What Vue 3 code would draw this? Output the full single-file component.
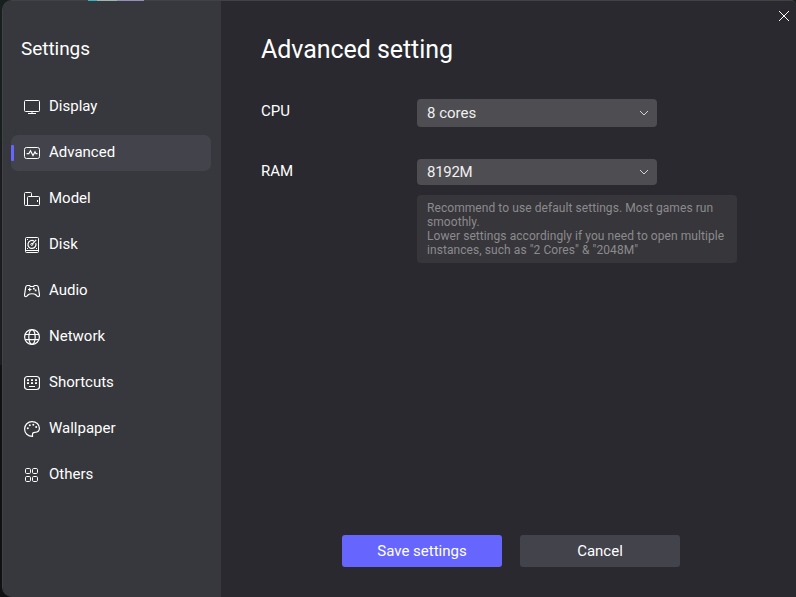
<script setup>
import { ref } from 'vue'

const items = ['Display', 'Advanced', 'Model', 'Disk', 'Audio', 'Network', 'Shortcuts', 'Wallpaper', 'Others']
const active = ref('Advanced')
const fields = [
  { label: 'CPU', value: '8 cores', kind: 'cpu' },
  { label: 'RAM', value: '8192M', kind: 'ram' },
]
</script>

<template>
  <div class="desktop">
    <div class="strip"></div>
    <div class="dialog">
      <aside class="sidebar">
        <h2 class="side-title">Settings</h2>
        <nav class="nav">
          <button
            v-for="name in items"
            :key="name"
            class="nav-item"
            :class="{ active: active === name }"
            @click="active = name"
          >
            <svg class="icon" width="16" height="16" viewBox="0 0 16 16">
              <g v-if="name === 'Display'">
                <rect x=".5" y="1.5" width="15" height="11" rx="1" />
                <path d="M8 12.5v2M4 14.5h8" />
              </g>
              <g v-else-if="name === 'Advanced'">
                <rect x=".5" y="2.5" width="15" height="11" rx="2" />
                <path class="bold" d="M2.6 8.7h2.200l1.700-3 2.500 4.800 2-3.800 1 2h1.500" />
              </g>
              <g v-else-if="name === 'Model'">
                <path d="M3.5 14.5h-2a1 1 0 0 1-1-1v-11a1 1 0 0 1 1-1h5a1 1 0 0 1 1 1v3" />
                <path d="M3.5 14.5v-8a1 1 0 0 1 1-1h10a1 1 0 0 1 1 1v7a1 1 0 0 1-1 1zM13.5 9v2" />
              </g>
              <g v-else-if="name === 'Disk'">
                <rect x="1.5" y=".5" width="13" height="15" rx="1" />
                <path d="M2 13.500h12" />
                <path class="bold" d="M10 4A4 4 0 1 0 11.700 6M8 7.400l4.200-4.600" />
                <circle cx="7.800" cy="7.400" r="1" />
                <path d="M3 2.500h1M3 11.500h1M12 11.500h1" />
              </g>
              <g v-else-if="name === 'Audio'">
                <path class="bold" d="M3.500 2.500h2l1 1h3l1-1h2c1 0 1.600.7 1.800 1.700l1.200 7.800c.2 1.600-1.800 2-2.500 1L11.500 11.500c-1.200-1-5.800-1-7 0L3 13c-.7 1-2.700.6-2.500-1l1.200-7.800C1.900 3.200 2.500 2.500 3.500 2.500z" />
                <path class="bold" d="M4 6.500h3.500M5.700 4.800v3.500" />
                <path class="solid" d="M9 4.700h1.700v1.700H9zM10.800 6.500h1.700v1.700h-1.700z" />
              </g>
              <g v-else-if="name === 'Network'" class="bold">
                <circle cx="8" cy="8" r="7.400" />
                <ellipse cx="8" cy="8" rx="3.200" ry="7.400" />
                <path d="M1.200 5.500h13.600M1.200 10.700h13.600" />
              </g>
              <g v-else-if="name === 'Shortcuts'">
                <rect x=".5" y="1.500" width="15" height="13" rx="3" class="bold" />
                <path class="solid" d="M3 4.200h2V6H3zM7 4.200h2V6H7zM11 4.200h2V6h-2zM3 7.200h2V9H3zM7 7.200h2V9H7zM11 7.200h2V9h-2z" />
                <path d="M5 11.500h6" />
              </g>
              <g v-else-if="name === 'Wallpaper'">
                <path class="bold" d="M8.500 15.400C3.700 15.400.6 12.200.6 8A7.400 7.400 0 0 1 8 .6c4.300 0 7.400 3 7.400 6.700 0 3-2 4-4.400 4-2.200 0-2.500.7-2.500 2z" />
                <circle class="solid" cx="3.800" cy="7.300" r="1" />
                <circle class="solid" cx="5.800" cy="4.300" r="1" />
                <circle class="solid" cx="9.300" cy="3.800" r="1" />
                <circle class="solid" cx="12.200" cy="6" r="1" />
              </g>
              <g v-else>
                <rect x="1.500" y="1.500" width="5" height="5" rx="1.200" />
                <rect x="8.500" y="1.500" width="5" height="5" rx="1.200" />
                <rect x="1.500" y="9.500" width="5" height="5" rx="1.200" />
                <rect x="8.500" y="9.500" width="5" height="5" rx="1.200" />
              </g>
            </svg>
            <span>{{ name }}</span>
          </button>
        </nav>
      </aside>

      <main class="content">
        <button class="close" aria-label="Close">
          <svg width="12" height="12" viewBox="0 0 12 12"><path d="M1 1l10 10M11 1L1 11" /></svg>
        </button>
        <h1 class="title">Advanced setting</h1>
        <div v-for="f in fields" :key="f.label" class="row" :class="f.kind">
          <span class="label">{{ f.label }}</span>
          <div class="select">
            <span>{{ f.value }}</span>
            <svg width="10" height="6" viewBox="0 0 10 6"><path d="M1 1l4 4 4-4" /></svg>
          </div>
        </div>
        <p class="hint">
          Recommend to use default settings. Most games run smoothly.<br />
          Lower settings accordingly if you need to open multiple instances, such as "2 Cores" &amp; "2048M"
        </p>
        <div class="actions">
          <button class="btn primary">Save settings</button>
          <button class="btn">Cancel</button>
        </div>
      </main>
    </div>
  </div>
</template>

<style>
body {
  background: #1b1c1f;
}
</style>

<style scoped>
.desktop {
  position: relative;
  box-sizing: border-box;
  width: 796px;
  height: 597px;
  padding-left: 2px;
  overflow: hidden;
  background: linear-gradient(#17201f 0 142px, #1b1c1f 142px 365px, #101113 365px);
  font: 15px/20px Roboto, sans-serif;
  color: #fff;
}
button {
  border: 0;
  padding: 0;
  background: none;
  color: inherit;
  font: inherit;
}
h1, h2, p {
  margin: 0;
  font-weight: 400;
}
.strip {
  position: absolute;
  z-index: 1;
  top: 0;
  left: 88px;
  width: 56px;
  height: 1px;
  background: linear-gradient(90deg, #35b5bd 0 9px, #9fb7ad 9px 29px, #9290b9 29px);
}
.dialog {
  box-sizing: border-box;
  display: flex;
  height: 597px;
  border: solid #414244;
  border-width: 1px 0 0 1px;
  border-radius: 10px 5px 0 10px;
  overflow: hidden;
  background: #2a292f;
}
.sidebar {
  box-sizing: border-box;
  width: 218px;
  padding: 35px 10px 0 8px;
  background: #37383d;
}
.side-title {
  padding-left: 10px;
  font-size: 19px;
  line-height: 26px;
  letter-spacing: -0.05px;
}
.nav {
  display: flex;
  flex-direction: column;
  gap: 10px;
  padding-top: 27px;
}
.nav-item {
  position: relative;
  display: flex;
  align-items: center;
  gap: 9px;
  height: 36px;
  padding: 0 0 2px 13px;
  border-radius: 7px;
}
.nav-item.active {
  background: #43444b;
}
.nav-item.active::before {
  content: '';
  position: absolute;
  left: 0;
  top: 10px;
  width: 3px;
  height: 16px;
  border-radius: 1px;
  background: #6666ff;
}
svg {
  flex: none;
  fill: none;
  stroke: #fff;
  stroke-width: 1;
}
.icon {
  margin-top: 2px;
}
.bold {
  stroke-width: 1.2;
}
.solid {
  fill: #fff;
  stroke: none;
}
.content {
  flex: 1;
  display: flex;
  flex-direction: column;
  padding: 0 57px 30px 40px;
}
.close {
  display: flex;
  align-self: flex-end;
  margin: 9px -51px 0 0;
}
.title {
  margin-top: 12px;
  font-size: 25px;
  line-height: 32px;
  letter-spacing: -0.05px;
}
.row {
  display: flex;
  align-items: flex-start;
}
.cpu {
  margin-top: 33px;
}
.ram {
  margin-top: 32px;
}
.label {
  width: 156px;
  padding-top: 2px;
}
.select {
  box-sizing: border-box;
  display: flex;
  align-items: center;
  justify-content: space-between;
  width: 240px;
  height: 28px;
  padding: 0 8px 0 10px;
  border-radius: 4px;
  background: #4e4d52;
  color: #f0f0f0;
}
.select svg {
  stroke: #d5d5d7;
}
.ram .select {
  height: 26px;
}
.ram .select span {
  letter-spacing: -0.3px;
}
.hint {
  box-sizing: border-box;
  width: 320px;
  height: 68px;
  margin: 10px 0 0 156px;
  padding: 6px 10px;
  border-radius: 4px;
  background: #37363a;
  color: #8b8b8e;
  font-size: 12px;
  line-height: 14px;
  letter-spacing: 0.07px;
}
.actions {
  display: flex;
  gap: 18px;
  margin: auto 0 0 81px;
}
.btn {
  width: 160px;
  height: 32px;
  border-radius: 3px;
  background: #43434c;
}
.primary {
  background: #6666ff;
}
</style>
